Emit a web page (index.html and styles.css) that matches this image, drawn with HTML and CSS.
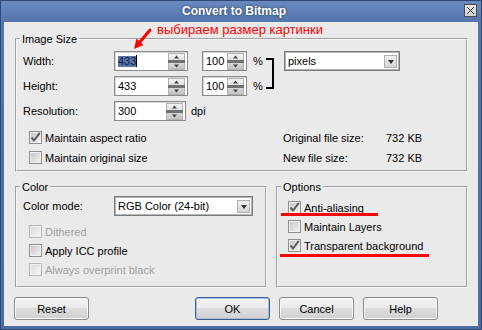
FILE: index.html
```html
<!DOCTYPE html>
<html lang="en">
<head>
    <meta charset="UTF-8">
    <meta name="viewport" content="width=device-width, initial-scale=1.0">
    <title>Convert to Bitmap</title>
    <link rel="stylesheet" href="styles.css">
</head>
<body>
    <svg class="defs" width="0" height="0">
        <defs>
            <linearGradient id="spinFill" x1="0" y1="0" x2="0" y2="1">
                <stop offset="0" stop-color="#f4f4f4"/>
                <stop offset="1" stop-color="#c2c2c2"/>
            </linearGradient>
            <symbol id="spin" viewBox="0 0 17 17">
                <rect x="0.5" y="0.5" width="16" height="16" fill="url(#spinFill)" stroke="#b2b2b2"/>
                <rect x="0" y="7" width="17" height="3" fill="#707070"/>
                <path d="M8.5 2.5 L11 5.5 H6 Z" fill="#444"/>
                <path d="M8.5 14.5 L11 11.5 H6 Z" fill="#444"/>
            </symbol>
            <symbol id="tick" viewBox="0 0 11 11">
                <path d="M1.5 5.5 L4 8.5 L9.8 0.8" fill="none" stroke="#5b5b5b" stroke-width="2"/>
            </symbol>
        </defs>
    </svg>

    <div class="window">
        <div class="titlebar">
            <span class="title">Convert to Bitmap</span>
            <span class="close-btn">
                <svg width="11" height="11" viewBox="0 0 11 11">
                    <path d="M2 2 L9 9 M9 2 L2 9" stroke="#333" stroke-width="1"/>
                </svg>
            </span>
        </div>

        <div class="client">
            <fieldset class="group image-size">
                <legend>Image Size</legend>
                <div class="size-grid">
                    <span class="row-label">Width:</span>
                    <div class="field num-field">
                        <span class="value"><span class="selected">433</span><span class="caret"></span></span>
                        <svg class="spin"><use href="#spin"/></svg>
                    </div>
                    <div class="field pct-field">
                        <span class="value">100</span>
                        <svg class="spin"><use href="#spin"/></svg>
                    </div>
                    <span class="pct-sign">%</span>
                    <div class="bracket"></div>
                    <div class="select units">
                        <span>pixels</span>
                        <span class="drop"></span>
                    </div>

                    <span class="row-label">Height:</span>
                    <div class="field num-field">
                        <span class="value">433</span>
                        <svg class="spin"><use href="#spin"/></svg>
                    </div>
                    <div class="field pct-field">
                        <span class="value">100</span>
                        <svg class="spin"><use href="#spin"/></svg>
                    </div>
                    <span class="pct-sign">%</span>

                    <span class="row-label">Resolution:</span>
                    <div class="field num-field res-field">
                        <span class="value">300</span>
                        <svg class="spin"><use href="#spin"/></svg>
                    </div>
                    <span class="dpi">dpi</span>
                </div>

                <div class="size-info">
                    <label class="check"><span class="box"><svg><use href="#tick"/></svg></span>Maintain aspect ratio</label>
                    <span>Original file size:</span>
                    <span>732 KB</span>
                    <label class="check"><span class="box"></span>Maintain original size</label>
                    <span>New file size:</span>
                    <span>732 KB</span>
                </div>
            </fieldset>

            <div class="lower">
                <fieldset class="group color-group">
                    <legend>Color</legend>
                    <div class="mode-row">
                        <span class="row-label">Color mode:</span>
                        <div class="select mode">
                            <span>RGB Color (24-bit)</span>
                            <span class="drop"></span>
                        </div>
                    </div>
                    <div class="check-list">
                        <label class="check disabled"><span class="box"></span>Dithered</label>
                        <label class="check"><span class="box"></span>Apply ICC profile</label>
                        <label class="check disabled"><span class="box"></span>Always overprint black</label>
                    </div>
                </fieldset>

                <fieldset class="group options-group">
                    <legend>Options</legend>
                    <div class="check-list">
                        <label class="check"><span class="box"><svg><use href="#tick"/></svg></span>Anti-aliasing</label>
                        <label class="check"><span class="box"></span>Maintain Layers</label>
                        <label class="check"><span class="box"><svg><use href="#tick"/></svg></span>Transparent background</label>
                    </div>
                </fieldset>
            </div>

            <div class="buttons">
                <button class="btn">Reset</button>
                <button class="btn ok">OK</button>
                <button class="btn">Cancel</button>
                <button class="btn">Help</button>
            </div>
        </div>

        <!-- red marks drawn over the screenshot -->
        <span class="note">выбираем размер картинки</span>
        <svg class="note-arrow" width="26" height="28" viewBox="0 0 26 28">
            <path d="M22 6 L11 19" stroke="#ff0000" stroke-width="3" stroke-linecap="round"/>
            <path d="M6 25 L15.5 21 L8.5 14.5 Z" fill="#ff0000"/>
        </svg>
        <span class="mark mark-aa"></span>
        <span class="mark mark-bg"></span>
    </div>
</body>
</html>
```

FILE: styles.css
```css
body {
    margin: 0;
    font-family: "Liberation Sans", Arial, sans-serif;
    font-size: 11px;
    color: #000;
    background: #ffffff;
}

.defs {
    position: absolute;
    width: 0;
    height: 0;
}

.window {
    position: relative;
    width: 482px;
    height: 330px;
    box-sizing: border-box;
    border: 1px solid #2d4673;
    padding: 0 3px 3px;
    background: linear-gradient(#6a8abf, #5475ad 21px, #4c6ca5);
}

.titlebar {
    display: flex;
    align-items: flex-start;
    height: 21px;
}

.title {
    flex: 1;
    text-align: center;
    line-height: 21px;
    font-size: 12px;
    font-weight: bold;
    color: #ffffff;
    text-shadow: 0 0 3px rgba(20, 30, 60, 0.7);
}

.close-btn {
    display: flex;
    align-items: center;
    justify-content: center;
    width: 13px;
    height: 13px;
    box-sizing: border-box;
    margin: 3px 1px 0 0;
    border: 1px solid #4a4a4a;
    background: linear-gradient(#e8e8e8, #cfcfcf);
}

.client {
    height: 304px;
    box-sizing: border-box;
    padding-top: 10px;
    background: #eaeaea;
}

/* group boxes */
.group {
    margin: 0;
    padding: 0;
    min-width: 0;
    border: 2px groove #f6f6f6;
}

.group legend {
    margin-left: 3px;
    padding: 0 2px;
    line-height: 14px;
}

.image-size {
    margin: 0 10px 0 11px;
    padding-bottom: 3px;
}

.size-grid {
    display: grid;
    grid-template-columns: 91px 74px 14px 45px 19px 9px 9px 116px;
    grid-template-rows: repeat(3, 20px);
    row-gap: 5px;
    align-items: center;
    margin: 5px 0 0 6px;
}

.row-label {
    grid-column: 1;
}

.num-field {
    grid-column: 2;
}

.res-field {
    width: 72px;
}

.pct-field {
    grid-column: 4;
}

.pct-sign {
    grid-column: 5;
    padding-left: 6px;
}

.dpi {
    grid-column: 3 / 6;
    padding-left: 3px;
}

.bracket {
    grid-column: 6;
    grid-row: 1 / 3;
    width: 6px;
    height: 27px;
    border: 2px solid #000;
    border-left: none;
}

.units {
    grid-column: 8;
    grid-row: 1;
}

/* inputs */
.field {
    display: flex;
    align-items: center;
    height: 20px;
    box-sizing: border-box;
    padding: 0 2px 0 3px;
    border: 1px solid #8a8a8a;
    box-shadow: inset 1px 1px 0 #d6d6d6;
    background: #ffffff;
}

.field .value {
    flex: 1;
    display: flex;
    align-items: center;
}

.selected {
    background: #5a76a6;
    color: #16204a;
    line-height: 11px;
}

.caret {
    width: 1px;
    height: 12px;
    background: #000;
}

.spin {
    width: 17px;
    height: 17px;
}

.select {
    display: flex;
    align-items: center;
    justify-content: space-between;
    height: 20px;
    box-sizing: border-box;
    padding: 0 2px 0 3px;
    border: 1px solid #7a7a7a;
    box-shadow: inset 0 0 0 1px #b4b4b4;
    background: #ffffff;
}

.drop {
    position: relative;
    width: 13px;
    height: 13px;
    box-sizing: border-box;
    border: 1px solid #b0b0b0;
    background: linear-gradient(#f2f2f2, #d4d4d4);
}

.drop::after {
    content: "";
    position: absolute;
    left: 3px;
    top: 4px;
    border-left: 3px solid transparent;
    border-right: 3px solid transparent;
    border-top: 4px solid #333;
}

/* checkboxes */
.size-info {
    display: grid;
    grid-template-columns: 254px 103px auto;
    grid-auto-rows: 19px;
    row-gap: 1px;
    align-items: center;
    margin: 7px 0 0 12px;
}

.check {
    display: flex;
    align-items: center;
    gap: 3px;
    height: 19px;
}

.box {
    display: flex;
    width: 13px;
    height: 13px;
    box-sizing: border-box;
    border: 1px solid #8e8f8f;
    box-shadow: inset 0 0 0 1px #f0f0f0;
    background: linear-gradient(135deg, #c4c4c4, #f4f4f4);
}

.box svg {
    width: 11px;
    height: 11px;
}

.check.disabled {
    color: #a2a2a2;
}

.check.disabled .box {
    border-color: #b8b8b8;
    background: linear-gradient(135deg, #d8d8d8, #f6f6f6);
}

.lower {
    display: flex;
    gap: 9px;
    margin: 8px 10px 0 11px;
}

.color-group {
    width: 252px;
    box-sizing: border-box;
    padding-bottom: 7px;
}

.options-group {
    flex: 1;
}

.mode-row {
    display: flex;
    align-items: center;
    margin: 2px 0 0 6px;
}

.mode-row .row-label {
    width: 91px;
}

.mode {
    width: 139px;
}

.check-list {
    margin: 6px 0 0 12px;
}

.options-group .check-list {
    margin-top: 4px;
    margin-left: 10px;
}

/* buttons */
.buttons {
    display: flex;
    gap: 9px;
    margin: 9px 0 0 10px;
    padding-right: 40px;
}

.btn {
    width: 75px;
    height: 23px;
    padding: 0;
    font-family: inherit;
    font-size: 11px;
    color: #000;
    border: 1px solid #8a8a8a;
    border-radius: 3px;
    box-shadow: inset 0 0 0 1px #fbfbfb;
    background: linear-gradient(#f4f4f4, #ebebeb 45%, #dddddd 50%, #cfcfcf);
}

.btn.ok {
    margin-left: auto;
    border-color: #3c5d92;
    box-shadow: inset 0 0 0 1px #a9bedb;
}

/* annotation */
.note {
    position: absolute;
    left: 156px;
    top: 21px;
    font-size: 13px;
    line-height: 16px;
    color: #ff0000;
}

.note-arrow {
    position: absolute;
    left: 127px;
    top: 23px;
}

.mark {
    position: absolute;
    height: 3px;
    background: #ff0000;
}

.mark-aa {
    left: 280px;
    top: 212px;
    width: 97px;
}

.mark-bg {
    left: 279px;
    top: 253px;
    width: 149px;
}
```
